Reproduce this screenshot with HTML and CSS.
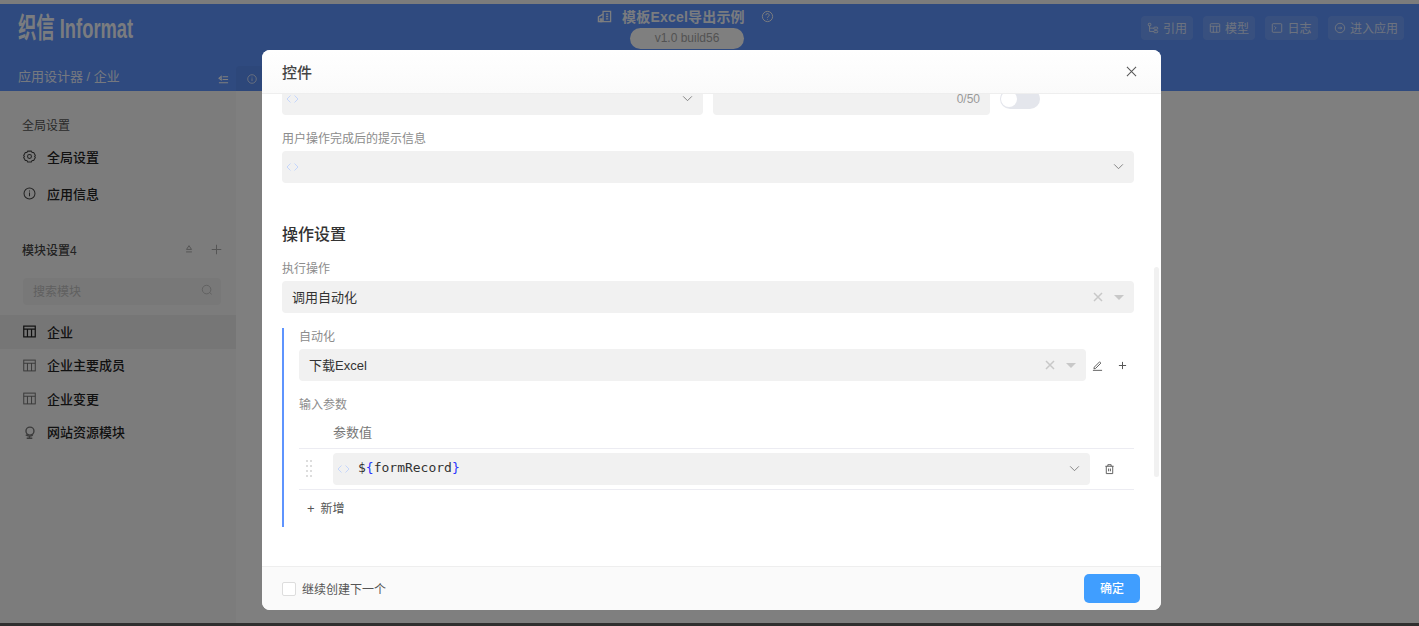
FILE: index.html
```html
<!DOCTYPE html>
<html lang="zh-CN">
<head>
<meta charset="utf-8">
<title>模板Excel导出示例</title>
<link rel="stylesheet" href="styles.css">
</head>
<body>
<div class="strip-top"></div>
<div class="app">
  <header class="header">
    <div class="header-top">
      <div class="logo"><span class="logo-text">织信 Informat</span></div>
      <div class="title-block">
        <div class="title-row">
          <svg class="title-icon" viewBox="0 0 16 16" fill="none" stroke="currentColor" stroke-width="1.400"><path d="M6.500 2.500h8v11h-13V8.500l5-3z"/><path d="M6.500 5.500v8M9.500 5.500h2.500M9.500 8h2.500M9.500 10.500h2.500M3.500 10.500h1.500v3h-1.500z"/></svg>
          <span class="title-text">模板Excel导出示例</span>
          <svg class="help-icon" viewBox="0 0 16 16" fill="none" stroke="currentColor" stroke-width="1.200"><circle cx="8" cy="8" r="6.300"/><path d="M6 6.400a2 2 0 1 1 3 1.700c-.7.400-1 .8-1 1.500M8 11.200v.8"/></svg>
        </div>
        <div class="version">v1.0 build56</div>
      </div>
      <nav class="actions">
        <span class="action a-ref"><svg viewBox="0 0 14 14" fill="none" stroke="currentColor" stroke-width="1.100"><rect x="1.500" y="1.500" width="3" height="3" rx="1"/><rect x="8" y="6" width="4.500" height="2.500" rx="1"/><rect x="8" y="10" width="4.500" height="2.500" rx="1"/><path d="M3 4.500V11h5M3 7.200h5"/></svg>引用</span>
        <span class="action a-model"><svg viewBox="0 0 14 14" fill="none" stroke="currentColor" stroke-width="1.100"><rect x="1.500" y="2" width="11" height="10" rx="1"/><path d="M1.500 5h11M5 5v7M9 5v7"/></svg>模型</span>
        <span class="action a-log"><svg viewBox="0 0 14 14" fill="none" stroke="currentColor" stroke-width="1.100"><rect x="1.500" y="2" width="11" height="10" rx="1"/><path d="M4 5l2 2-2 2"/></svg>日志</span>
        <span class="action a-enter"><svg viewBox="0 0 14 14" fill="none" stroke="currentColor" stroke-width="1.100"><circle cx="7" cy="7" r="5.500"/><path d="M4.500 7h4.500M7.500 5.500L9 7l-1.500 1.500"/></svg>进入应用</span>
      </nav>
    </div>
    <div class="header-bottom">
      <div class="crumb-wrap">
        <span class="crumb">应用设计器 / 企业</span>
        <svg class="collapse" viewBox="0 0 12 12" fill="none" stroke="currentColor" stroke-width="1.100"><path d="M5 3h6M5 6h6M1 9.500h10M3.500 2.500L1 4.500l2.500 2z"/></svg>
      </div>
      <div class="tab">
        <svg viewBox="0 0 14 14" fill="none" stroke="currentColor" stroke-width="1"><circle cx="7" cy="7" r="5"/><path d="M7 6.200v3.300M7 4.300v.9"/></svg>
      </div>
    </div>
  </header>

  <div class="workspace">
    <aside class="sidebar">
      <div class="group-label first">全局设置</div>
      <div class="nav-item tall">
        <svg class="nav-icon strong" viewBox="0 0 14 14" fill="none" stroke="currentColor" stroke-width="1.100" stroke-linejoin="round"><path d="M5 1.200h4l.8 1.500 1.700.1 1.800 3.200-.9 1 .9 1-1.800 3.200-1.700.1-.8 1.500H5l-.8-1.500-1.700-.1L.7 8l.9-1-.9-1 1.800-3.200 1.700-.1z"/><circle cx="7" cy="7" r="2.100"/></svg>
        <span>全局设置</span>
      </div>
      <div class="nav-item tall">
        <svg class="nav-icon strong" viewBox="0 0 14 14" fill="none" stroke="currentColor" stroke-width="1.100"><circle cx="7" cy="7" r="5.900"/><path d="M7 6v4M7 3.800v1"/></svg>
        <span>应用信息</span>
      </div>
      <div class="module-head">
        <span class="module-title">模块设置4</span>
        <svg class="mh-sort" viewBox="0 0 12 12" fill="none" stroke="currentColor" stroke-width="1"><path d="M6 2L3 6.500h6zM2.500 9.500h7"/></svg>
        <svg class="mh-add" viewBox="0 0 12 12" fill="none" stroke="currentColor" stroke-width="1.100"><path d="M6 .8v10.400M.8 6h10.400"/></svg>
      </div>
      <div class="search">
        <span>搜索模块</span>
        <svg viewBox="0 0 14 14" fill="none" stroke="currentColor" stroke-width="1"><circle cx="6.500" cy="6.500" r="5"/><path d="M10 10l2.500 2"/></svg>
      </div>
      <div class="nav-item mod active">
        <svg class="nav-icon" viewBox="0 0 14 14" fill="none" stroke="currentColor" stroke-width="1.300"><rect x=".8" y="1.200" width="12.400" height="11.600"/><path d="M.8 4.500h12.400M4.800 4.500v8.300M9.200 4.500v8.300"/></svg>
        <span>企业</span>
      </div>
      <div class="nav-item mod">
        <svg class="nav-icon dim" viewBox="0 0 14 14" fill="none" stroke="currentColor" stroke-width="1.100"><rect x=".8" y="1.200" width="12.400" height="11.600"/><path d="M.8 4.500h12.400M4.800 4.500v8.300M9.200 4.500v8.300"/></svg>
        <span>企业主要成员</span>
      </div>
      <div class="nav-item mod">
        <svg class="nav-icon dim" viewBox="0 0 14 14" fill="none" stroke="currentColor" stroke-width="1.100"><rect x=".8" y="1.200" width="12.400" height="11.600"/><path d="M.8 4.500h12.400M4.800 4.500v8.300M9.200 4.500v8.300"/></svg>
        <span>企业变更</span>
      </div>
      <div class="nav-item mod">
        <svg class="nav-icon dim" viewBox="0 0 14 14" fill="none" stroke="currentColor" stroke-width="1.500"><circle cx="7.500" cy="5.500" r="4.300"/><path d="M3 9.500c2 1.800 5.500 1.800 7.500.3M7 11v2M4 13.200h6"/></svg>
        <span>网站资源模块</span>
      </div>
    </aside>
    <main class="main"></main>
  </div>

  <div class="overlay">
    <section class="modal">
      <div class="modal-head">
        <span class="modal-title">控件</span>
        <svg class="close" viewBox="0 0 12 12" fill="none" stroke="currentColor" stroke-width="1.100"><path d="M1 1l10 10M11 1L1 11"/></svg>
      </div>
      <div class="modal-body">
        <div class="cut-row">
          <div class="field code f-a">
            <svg class="code-mark" viewBox="0 0 13 8" fill="none" stroke="currentColor" stroke-width="1"><path d="M4.500 .5L1 4l3.500 3.500M8.500 .5L12 4 8.500 7.500"/></svg>
            <svg class="chev" viewBox="0 0 12 8" fill="none" stroke="currentColor" stroke-width="1"><path d="M1 1.500l5 5 5-5"/></svg>
          </div>
          <div class="field f-b"><span class="count">0/50</span></div>
          <span class="switch"><span class="knob"></span></span>
        </div>
        <div class="label l-gap">用户操作完成后的提示信息</div>
        <div class="field code">
          <svg class="code-mark" viewBox="0 0 13 8" fill="none" stroke="currentColor" stroke-width="1"><path d="M4.500 .5L1 4l3.500 3.500M8.500 .5L12 4 8.500 7.500"/></svg>
          <svg class="chev" viewBox="0 0 12 8" fill="none" stroke="currentColor" stroke-width="1"><path d="M1 1.500l5 5 5-5"/></svg>
        </div>
        <h2 class="section-title">操作设置</h2>
        <div class="label l-small">执行操作</div>
        <div class="field select">
          <span class="value">调用自动化</span>
          <svg class="clear" viewBox="0 0 10 10" fill="none" stroke="currentColor" stroke-width="1.500"><path d="M1 1l8 8M9 1L1 9"/></svg>
          <span class="caret"></span>
        </div>
        <div class="sub-section">
          <div class="label sub-first">自动化</div>
          <div class="auto-row">
            <div class="field select grow">
              <span class="value">下载Excel</span>
              <svg class="clear" viewBox="0 0 10 10" fill="none" stroke="currentColor" stroke-width="1.500"><path d="M1 1l8 8M9 1L1 9"/></svg>
              <span class="caret"></span>
            </div>
            <svg class="tool edit" viewBox="0 0 12 12" fill="none" stroke="currentColor" stroke-width="1"><path d="M2.500 7.800L8.300 2l1.400 1.400-5.800 5.800-1.800.4zM1 11.300h10"/></svg>
            <svg class="tool plus" viewBox="0 0 10 10" fill="none" stroke="currentColor" stroke-width="1.100"><path d="M5 1v8M1 5h8"/></svg>
          </div>
          <div class="label l-gap">输入参数</div>
          <div class="th"><span>参数值</span></div>
          <div class="param-row">
            <span class="handle"><i></i><i></i><i></i><i></i><i></i><i></i><i></i><i></i></span>
            <div class="field code param">
              <svg class="code-mark" viewBox="0 0 13 8" fill="none" stroke="currentColor" stroke-width="1"><path d="M4.500 .5L1 4l3.500 3.500M8.500 .5L12 4 8.500 7.500"/></svg>
              <code class="expr">$<b>{</b>formRecord<b>}</b></code>
              <svg class="chev" viewBox="0 0 12 8" fill="none" stroke="currentColor" stroke-width="1"><path d="M1 1.500l5 5 5-5"/></svg>
            </div>
            <svg class="trash" viewBox="0 0 12 12" fill="none" stroke="currentColor" stroke-width="1"><path d="M1.500 3h9M4.200 3V1.300h3.600V3M2.500 3v8h7V3M5 5.500v3M7 5.500v3"/></svg>
          </div>
          <div class="add-row"><span class="add-plus">+</span>新增</div>
        </div>
      </div>
      <span class="scrollbar"></span>
      <div class="modal-foot">
        <label class="check"><span class="box"></span><span class="check-text">继续创建下一个</span></label>
        <button class="ok" type="button"><span>确定</span></button>
      </div>
    </section>
  </div>
</div>
<div class="strip-bottom"></div>
</body>
</html>
```

FILE: styles.css
```css
* { box-sizing: border-box; }
html, body { margin: 0; height: 626px; overflow: hidden; }
body {
  font-family: "Liberation Sans", "Noto Sans CJK SC", sans-serif;
  font-size: 13px;
  color: #333;
  background: #fff;
  display: flex;
  flex-direction: column;
}
svg { display: block; flex: none; }
.strip-top { height: 4px; background: #7c7c7c; flex: none; }
.strip-bottom { height: 3px; background: #2f2f2f; flex: none; }
.app { position: relative; height: 619px; flex: none; display: flex; flex-direction: column; background: #fff; }

/* header */
.header { height: 87px; flex: none; background: #5e94fe; color: #fff; display: flex; flex-direction: column; }
.header-top { height: 62px; display: flex; align-items: flex-start; }
.logo { width: 597px; padding: 10px 0 0 18px; flex: none; }
.logo-text { display: inline-block; font-size: 28px; line-height: 30px; font-weight: 700; color: rgba(255,255,255,.95); transform: scaleX(.655); transform-origin: left center; white-space: nowrap; }
.title-block { width: 180px; flex: none; display: flex; flex-direction: column; }
.title-row { display: flex; align-items: center; height: 24px; color: rgba(255,255,255,.95); }
.title-icon { width: 15px; height: 15px; }
.title-text { margin-left: 10px; font-size: 14px; font-weight: 700; letter-spacing: .2px; white-space: nowrap; }
.help-icon { width: 13px; height: 13px; margin-left: 16px; }
.version { margin: 0 0 0 33px; width: 114px; height: 21px; border-radius: 11px; background: #fff; color: #a6a6a6; font-size: 12px; line-height: 21px; text-align: center; }
.actions { margin-left: auto; padding: 12px 15px 0 0; display: flex; gap: 10px; }
.action { height: 24px; border-radius: 4px; background: rgba(255,255,255,.12); color: rgba(255,255,255,.75); display: flex; align-items: center; justify-content: center; gap: 4px; font-size: 12px; padding-bottom: 1px; }
.action svg { width: 12px; height: 12px; margin-top: 1px; }
.a-ref, .a-model { width: 52px; }
.a-log { width: 53px; }
.a-enter { width: 76px; }
.header-bottom { height: 25px; display: flex; }
.crumb-wrap { width: 236px; display: flex; align-items: center; padding: 0 6px 4px 18px; justify-content: space-between; }
.crumb { font-size: 13px; line-height: 20px; color: rgba(255,255,255,.9); }
.collapse { width: 11px; height: 11px; margin-top: 5px; margin-right: 1px; }
.tab { width: 120px; background: #5a8ef5; border-radius: 4px 0 0 0; padding: 7px 0 0 10px; color: rgba(255,255,255,.8); }
.tab svg { width: 12px; height: 12px; }

/* sidebar */
.workspace { flex: 1; display: flex; min-height: 0; }
.sidebar { width: 236px; flex: none; background: #f9f9f9; display: flex; flex-direction: column; }
.main { flex: 1; background: #fff; }
.group-label { padding-left: 22px; font-size: 12px; line-height: 20px; color: #555; }
.first { margin-top: 25px; margin-bottom: 1.500px; }
.nav-item { display: flex; align-items: center; padding-left: 23px; font-size: 13px; font-weight: 500; color: #222; }
.nav-item span { margin-left: 11px; }
.nav-icon { width: 13px; height: 13px; }
.nav-icon.dim { color: #777; }
.nav-icon.strong { color: #444; }
.tall { height: 37px; }
.module-head { display: flex; align-items: center; margin-top: 27.500px; height: 20px; padding: 0 14px 0 22px; }
.module-title { font-size: 12px; font-weight: 500; color: #444; flex: 1; }
.mh-sort { width: 10px; height: 10px; color: #999; margin-right: 17px; }
.mh-add { width: 11px; height: 11px; color: #aaa; }
.search { margin: 19px 15px 0 23px; height: 27px; background: #f1f1f1; border-radius: 4px; display: flex; align-items: center; justify-content: space-between; padding: 0 8px 3px 10px; font-size: 12px; color: #c0c0c0; }
.search svg { width: 12px; height: 12px; color: #bbb; }
.mod { height: 33.500px; }
.mod span { margin-bottom: 1px; }
.active { margin-top: 10px; background: #ececec; }

/* overlay & modal */
.overlay { position: absolute; inset: 0; background: rgba(0,0,0,.5); }
.modal { position: absolute; left: 262px; top: 46px; width: 899px; height: 560px; border-radius: 8px; background: #fff; display: flex; flex-direction: column; overflow: hidden; }
.modal-head { height: 44px; flex: none; display: flex; align-items: center; justify-content: space-between; padding: 0 24px 0 20px; background: linear-gradient(#fff, #fafafa); border-bottom: 1px solid #eee; position: relative; z-index: 1; }
.modal-title { font-size: 15px; font-weight: 500; color: #444; margin-bottom: 1px; }
.close { width: 11px; height: 11px; color: #555; }
.modal-body { flex: 1; min-height: 0; overflow: hidden; padding: 0 27px 0 20px; }
.cut-row { display: flex; align-items: center; margin-top: -11px; gap: 10px; }
.field { height: 32px; border-radius: 4px; background: #f1f1f1; display: flex; align-items: center; position: relative; font-size: 13px; color: #333; }
.f-a { width: 421px; }
.f-b { width: 277px; justify-content: flex-end; padding-right: 10px; }
.count { font-size: 12px; line-height: 12px; color: #999; }
.switch { width: 40px; height: 20px; border-radius: 10px; background: #e4e6ec; position: relative; display: block; }
.knob { position: absolute; left: 1px; top: 2px; width: 16px; height: 16px; border-radius: 50%; background: #fff; }
.code { padding: 0 10px 0 4px; }
.code-mark { width: 13px; height: 8px; color: #c5d6fb; }
.chev { width: 11px; height: 7px; color: #777; margin-left: auto; margin-bottom: 2px; }
.label { font-size: 12px; height: 20px; padding-top: 2px; line-height: 18px; color: #8c8c8c; }
.l-gap { margin-top: 13px; margin-bottom: 3px; }
.l-small { margin-top: 12px; margin-bottom: 3px; }
.section-title { margin: 39px 0 0; font-size: 16px; height: 24px; padding-top: 2px; line-height: 22px; font-weight: 500; color: #333; }
.select { padding: 0 10px; }
.value { flex: 1; margin-bottom: 2px; }
.clear { width: 10px; height: 10px; color: #c8c8c8; margin-right: 11px; }
.caret { width: 0; height: 0; border: 5px solid transparent; border-top: 5px solid #c8c8c8; border-bottom: 0; }
.sub-section { margin-top: 15px; height: 199px; border-left: 2px solid #5e94fe; padding-left: 15px; display: flow-root; }
.sub-first { margin-top: -2px; margin-bottom: 3px; }
.auto-row { display: flex; align-items: center; }
.grow { flex: 1; min-width: 0; }
.tool { flex: none; color: #555; }
.edit { width: 11px; height: 11px; margin-left: 6px; }
.plus { width: 9px; height: 9px; margin-left: 15px; margin-right: 7px; }
.th { height: 35px; padding: 9px 0 0 34px; border-bottom: 1px solid #ececf2; font-size: 13px; line-height: 20px; color: #777; margin-top: -3px; }
.param-row { height: 41px; display: flex; align-items: center; border-bottom: 1px solid #ececf2; }
.handle { width: 34px; flex: none; display: grid; grid-template-columns: 2px 2px; gap: 3px 2px; padding-left: 7px; margin-bottom: 1px; }
.handle i { display: block; width: 2px; height: 2px; background: #ddd; }
.param { width: 757px; flex: none; }
.expr { font-family: "DejaVu Sans Mono", monospace; font-size: 13px; color: #333; margin-left: 8px; margin-bottom: 3px; }
.expr b { font-weight: 400; color: #2a35ff; }
.trash { width: 11px; height: 12px; color: #555; margin-left: 14px; margin-bottom: 1px; }
.add-row { padding: 9px 0 0 8px; font-size: 12px; line-height: 20px; color: #555; }
.add-plus { font-size: 13px; margin-right: 6px; }
.scrollbar { position: absolute; left: 892px; top: 217px; width: 5px; height: 210px; background: #f1f1f1; border-radius: 3px; }
.modal-foot { height: 44px; flex: none; background: #fafafa; border-top: 1px solid #eee; display: flex; align-items: center; justify-content: space-between; padding: 0 21px 0 20px; }
.check { display: flex; align-items: center; gap: 6px; font-size: 12px; color: #555; }
.check-text { margin-bottom: 1px; }
.box { width: 14px; height: 14px; background: #fff; border: 1px solid #ddd; border-radius: 2px; }
.ok { width: 56px; height: 29px; padding: 0 0 2px; background: #409eff; border: 0; border-radius: 5px; color: #fff; font: 500 12px "Liberation Sans", "Noto Sans CJK SC", sans-serif; }
```
